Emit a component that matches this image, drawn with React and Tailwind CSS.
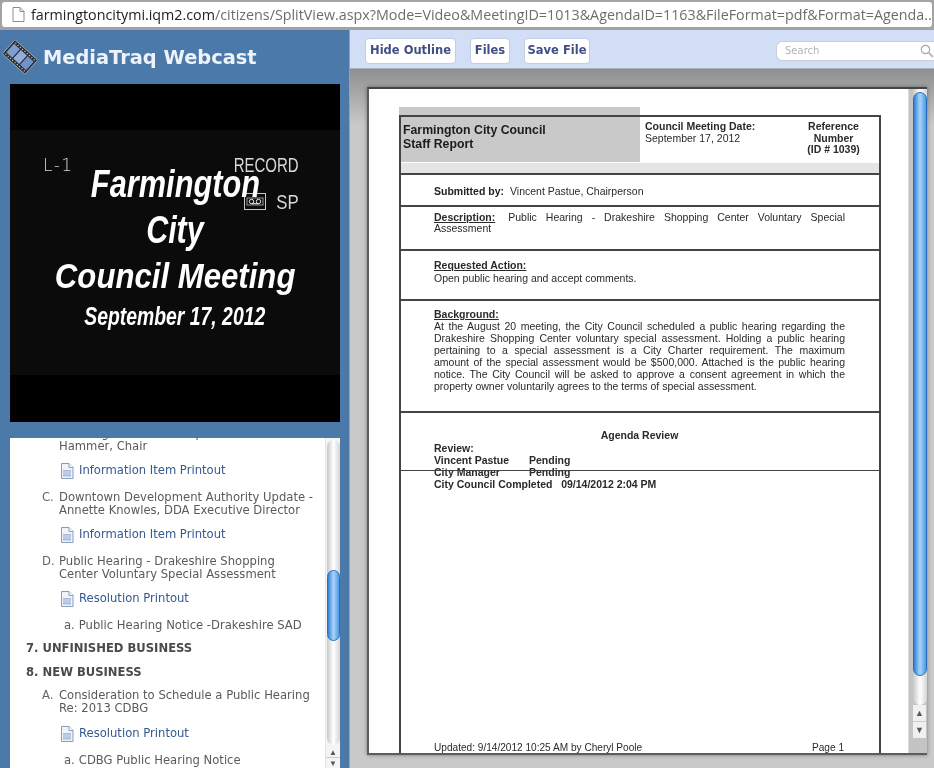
const sans = "font-['DejaVu_Sans',sans-serif]";
const arial = "font-['Liberation_Sans',Arial,sans-serif]";

function FileIcon() {
  return (
    <svg width="14" height="16" viewBox="0 0 14 16" className="shrink-0">
      <path d="M1.500.5h7.500l4 4v11h-11.500z" fill="#eef2f9" stroke="#8a9cb8" />
      <path d="M9 .5v4h4" fill="#fff" stroke="#8a9cb8" />
      <rect x="3" y="7" width="8" height="6.500" fill="#a9bedd" />
      <path d="M3 9h8M3 11h8" stroke="#dfe8f5" strokeWidth="0.700" />
    </svg>
  );
}

function Logo() {
  const xs = [-13, -9.75, -6.5, -3.25, 0, 3.25, 6.5, 9.75, 13];
  return (
    <svg width="38" height="36" viewBox="0 0 38 36" className="shrink-0">
      <g transform="translate(19 17) rotate(42) scale(0.95)">
        <rect x="-16" y="-10" width="32" height="20" rx="1" fill="#2b2c32" stroke="#aeb6c2" strokeWidth="0.800" />
        <rect x="-14" y="-6" width="8.500" height="12" fill="#7f9ed0" />
        <rect x="-4.200" y="-6" width="8.500" height="12" fill="#92aedb" />
        <rect x="5.500" y="-6" width="8.500" height="12" fill="#7191c8" />
        {xs.map((x) => (
          <g key={x}>
            <rect x={x - 0.6} y="-8.500" width="1.200" height="1.400" fill="#c9cdd4" />
            <rect x={x - 0.6} y="7.100" width="1.200" height="1.400" fill="#c9cdd4" />
          </g>
        ))}
      </g>
    </svg>
  );
}

function Link({ children }) {
  return (
    <div className="flex items-center gap-[5px] pl-[50px] h-[16px] text-[#33598f]">
      <FileIcon />
      <span>{children}</span>
    </div>
  );
}

function Item({ label, lines, mt = "mt-[12px]" }) {
  return (
    <div className={`flex ${mt} pl-[32px] leading-[13px]`}>
      <span className="w-[17px] shrink-0 text-[#666]">{label}</span>
      <div>{lines.map((l) => <div key={l}>{l}</div>)}</div>
    </div>
  );
}

function Button({ children, className }) {
  return (
    <div className={`h-[26px] flex items-center justify-center bg-white rounded-[4px] border border-[#c3cee3] text-[11.500px] font-bold text-[#3f4f86] ${sans} ${className}`}>
      {children}
    </div>
  );
}

function Line({ children }) {
  return <div className="[text-align-last:justify] whitespace-nowrap">{children}</div>;
}

export default function App() {
  return (
    <div className="w-[934px] h-[768px] overflow-hidden flex flex-col bg-[#c9c9c9] blur-[0.35px]">
      {/* browser bar */}
      <div className="h-[30px] shrink-0 bg-[#a3a3a3] pt-[2px] px-[2px] pb-[3px]">
        <div className="h-[25px] bg-white rounded-[3px] flex items-center pl-[10px] overflow-hidden whitespace-nowrap font-['Open_Sans',sans-serif] text-[14.300px]">
          <svg width="13" height="15" viewBox="0 0 13 15" className="shrink-0 mr-[6px]">
            <path d="M1 .5h7l4 4v10H1z" fill="#fff" stroke="#8c8c8c" />
            <path d="M8 .5v4h4" fill="none" stroke="#8c8c8c" />
          </svg>
          <span className="text-[#222]">farmingtoncitymi.iqm2.com</span>
          <span className="text-[#6d6d6d]">/citizens/SplitView.aspx?Mode=Video&amp;MeetingID=1013&amp;AgendaID=1163&amp;FileFormat=pdf&amp;Format=Agenda...</span>
        </div>
      </div>

      <div className="flex-1 flex min-h-0">
        {/* left panel */}
        <div className="w-[350px] shrink-0 bg-[#4b79aa] flex flex-col px-[10px] border-r border-[#8fa3bd]">
          <div className="h-[54px] shrink-0 flex items-center -ml-[9px] pt-[2px]">
            <Logo />
            <span className={`ml-[4px] text-[19.400px] font-bold text-[#eef3fa] ${sans}`}>MediaTraq Webcast</span>
          </div>

          <div className="w-[330px] h-[338px] shrink-0 bg-black pt-[46px]">
            <div className="relative h-[245px] bg-[#0b0b0b] text-white font-['Liberation_Sans',sans-serif]">
              <span className={`absolute left-[33px] top-[23px] text-[17px] tracking-[1.500px] text-[#d8d8d8] ${sans} font-light`}>L-1</span>
              <span className="absolute right-[41px] top-[20px] text-[20px] text-[#d8d8d8] scale-x-[0.75] origin-right">RECORD</span>
              <span className="absolute right-[41px] top-[57px] text-[20px] text-[#d8d8d8] scale-x-[0.84] origin-right">SP</span>
              <svg width="22" height="17" viewBox="0 0 22 17" className="absolute left-[234px] top-[63px]">
                <rect x="0.500" y="0.500" width="21" height="16" fill="none" stroke="#c8c8c8" />
                <rect x="3" y="5" width="16" height="7" fill="none" stroke="#9a9a9a" />
                <circle cx="7.500" cy="8.500" r="2.200" fill="none" stroke="#eee" />
                <circle cx="14.500" cy="8.500" r="2.200" fill="none" stroke="#eee" />
                <path d="M7.500 10.700h7" stroke="#eee" />
              </svg>
              <div className="pt-[29px] flex flex-col items-center italic font-bold">
                <div className="text-[38px] leading-[50px] scale-x-[0.81]">Farmington</div>
                <div className="text-[38px] leading-[46px] mt-[-2px] scale-x-[0.8]">City</div>
                <div className="text-[35px] leading-[46px] scale-x-[0.89]">Council Meeting</div>
                <div className="text-[25px] leading-[36px] -mt-[1px] scale-x-[0.775]">September 17, 2012</div>
              </div>
            </div>
          </div>

          {/* agenda list */}
          <div className="relative w-[330px] h-[330px] mt-[16px] shrink-0 bg-white overflow-hidden">
            <div className={`-mt-[11px] pr-[16px] text-[11.600px] text-[#5a5a5a] whitespace-nowrap ${sans}`}>
              <Item mt="mt-0" label="" lines={["Planning Commission Update -", "Hammer, Chair"]} />
              <div className="mt-[10px]"><Link>Information Item Printout</Link></div>
              <Item label="C." lines={["Downtown Development Authority Update -", "Annette Knowles, DDA Executive Director"]} />
              <div className="mt-[10px]"><Link>Information Item Printout</Link></div>
              <Item label="D." lines={["Public Hearing - Drakeshire Shopping", "Center Voluntary Special Assessment"]} />
              <div className="mt-[10px]"><Link>Resolution Printout</Link></div>
              <div className="mt-[11px] pl-[54px] leading-[14px]">a.<span className="ml-[4px]">Public Hearing Notice -Drakeshire SAD</span></div>
              <div className="mt-[9px] pl-[16px] font-bold text-[#4a4a4a] leading-[14px]">7. UNFINISHED BUSINESS</div>
              <div className="mt-[10px] pl-[16px] font-bold text-[#4a4a4a] leading-[14px]">8. NEW BUSINESS</div>
              <Item mt="mt-[10px]" label="A." lines={["Consideration to Schedule a Public Hearing", "Re: 2013 CDBG"]} />
              <div className="mt-[11px]"><Link>Resolution Printout</Link></div>
              <div className="mt-[11px] pl-[54px] leading-[14px]">a.<span className="ml-[4px]">CDBG Public Hearing Notice</span></div>
            </div>
            {/* scrollbar */}
            <div className="absolute right-0 top-0 bottom-0 w-[15px] bg-[#f4f4f4] border-l border-[#e5e5e5] flex flex-col items-center">
              <div className="w-[13px] h-[306px] mt-[2px] rounded-[7px] bg-gradient-to-r from-[#c8c8c8] via-white to-[#d4d4d4] relative">
                <div className="absolute left-0 top-[130px] w-[13px] h-[71px] rounded-[7px] border border-[#2a6cc0] bg-gradient-to-r from-[#2f7fd8] via-[#a8d4f7] to-[#4a9ae6]" />
              </div>
              <div className="mt-[2px] text-[8px] leading-[10px] text-[#555]">▲</div>
              <div className="border-t border-[#ccc] w-full text-center text-[8px] leading-[10px] text-[#555]">▼</div>
            </div>
          </div>
        </div>

        {/* right panel */}
        <div className="flex-1 min-w-0 flex flex-col">
          <div className="h-[39px] shrink-0 bg-[#d2def5] border-b border-[#a9b0bb] flex items-center pl-[15px] pt-[3px]">
            <Button className="w-[91px]">Hide Outline</Button>
            <Button className="w-[40px] ml-[14px]">Files</Button>
            <Button className="w-[66px] ml-[14px]">Save File</Button>
            <div className="ml-[186px] flex-1 h-[20px] bg-white rounded-l-[6px] border border-[#c8ced8] border-r-0 flex items-center justify-between pl-[8px] pr-[0px]">
              <span className={`text-[10px] text-[#b4b4b4] ${sans}`}>Search</span>
              <svg width="14" height="14" viewBox="0 0 14 14">
                <circle cx="5.500" cy="5.500" r="4.200" fill="none" stroke="#a8a8a8" strokeWidth="1.200" />
                <path d="M9 9l4 4" stroke="#b8b8b8" strokeWidth="2" />
              </svg>
            </div>
          </div>

          <div className="flex-1 min-h-0 bg-gradient-to-b from-[#8f8f8f] via-[#c9c9c9] via-[8%] to-[#c9c9c9] pl-[17px] pr-[7px] pt-[18px] pb-[13px]">
            <div className="h-full flex border-2 border-r-0 border-[#5c5c5c] border-t-[#444] bg-white shadow-[0_0_4px_rgba(0,0,0,0.4)]">
              {/* pdf page */}
              <div className={`relative flex-1 min-w-0 pl-[30px] pr-[27px] pt-[26px] text-[10.500px] text-[#2a2a2a] leading-[11.500px] ${arial}`}>
                <div className="absolute left-[30px] top-[18px] w-[241px] h-[55px] bg-[#c9c9c9]" />
                <div className="relative h-full border-x-2 border-t-2 border-[#444] flex flex-col">
                  <div className="h-[46px] shrink-0 flex">
                    <div className="w-[240px] shrink-0 pl-[2px] pt-[6px] font-bold text-[12.300px] leading-[14px] text-[#1c1c1c]">
                      Farmington City Council<br />Staff Report
                    </div>
                    <div className="w-[150px] shrink-0 pl-[4px] pt-[4px]">
                      <b>Council Meeting Date:</b><br />September 17, 2012
                    </div>
                    <div className="flex-1 pt-[4px] pr-[3px] text-center font-bold">Reference<br />Number<br />(ID # 1039)</div>
                  </div>
                  <div className="h-[10px] shrink-0 bg-[#e4e4e4]" />
                  <div className="h-[32px] shrink-0 border-t-2 border-[#444] pl-[33px] pt-[4px] flex items-center whitespace-nowrap">
                    <b className="text-[#222]">Submitted by:</b><span className="ml-[6px]">Vincent Pastue, Chairperson</span>
                  </div>
                  <div className="h-[44px] shrink-0 border-t-2 border-[#444] pl-[33px] pr-[34px] pt-[5px] leading-[11px]">
                    <Line><b className="underline">Description:</b> <span className="ml-[4px]">Public Hearing - Drakeshire Shopping Center Voluntary Special</span></Line>
                    <div>Assessment</div>
                  </div>
                  <div className="h-[50px] shrink-0 border-t-2 border-[#444] pl-[33px] pr-[34px] pt-[8px] leading-[12.500px]">
                    <b className="underline">Requested Action:</b>
                    <div>Open public hearing and accept comments.</div>
                  </div>
                  <div className="h-[112px] shrink-0 border-t-2 border-[#444] pl-[33px] pr-[34px] pt-[7px] leading-[12px]">
                    <b className="underline">Background:</b>
                    <Line>At the August 20 meeting, the City Council scheduled a public hearing regarding the</Line>
                    <Line>Drakeshire Shopping Center voluntary special assessment. Holding a public hearing</Line>
                    <Line>pertaining to a special assessment is a City Charter requirement. The maximum</Line>
                    <Line>amount of the special assessment would be $500,000. Attached is the public hearing</Line>
                    <Line>notice. The City Council will be asked to approve a consent agreement in which the</Line>
                    <div>property owner voluntarily agrees to the terms of special assessment.</div>
                  </div>
                  <div className="h-[59px] shrink-0 border-t-2 border-[#444] pl-[33px] pr-[34px] pt-[16px] font-bold leading-[12px] whitespace-nowrap">
                    <div className="text-center">Agenda Review</div>
                    <div className="mt-[1px]">Review:</div>
                    <div className="flex"><span className="w-[95px]">Vincent Pastue</span>Pending</div>
                    <div className="flex"><span className="w-[95px]">City Manager</span>Pending</div>
                    <div>City Council Completed&nbsp;&nbsp; 09/14/2012 2:04 PM</div>
                  </div>
                  <div className="flex-1 border-t border-[#444] flex items-end justify-between pl-[33px] pr-[35px] whitespace-nowrap text-[10.100px]">
                    <span>Updated: 9/14/2012 10:25 AM by Cheryl Poole</span>
                    <span>Page 1</span>
                  </div>
                </div>
              </div>
              {/* scrollbar */}
              <div className="w-[19px] shrink-0 bg-[#c4c4c4] border-l border-[#dcdcdc] flex flex-col items-end">
                <div className="w-[14px] h-[616px] bg-gradient-to-r from-[#c8c8c8] via-white to-[#d4d4d4] rounded-b-[8px] pt-[3px]">
                  <div className="h-[584px] rounded-[7px] border border-[#2a6cc0] bg-gradient-to-r from-[#2f7fd8] via-[#a8d4f7] to-[#4a9ae6]" />
                </div>
                <div className="w-[13px] mr-[1px] bg-[#f0f0f0] text-center text-[9px] leading-[16px] text-[#555]">▲</div>
                <div className="w-[13px] mr-[1px] bg-[#f0f0f0] border-t border-[#ccc] text-center text-[9px] leading-[16px] text-[#555]">▼</div>
              </div>
            </div>
          </div>
        </div>
      </div>
    </div>
  );
}
